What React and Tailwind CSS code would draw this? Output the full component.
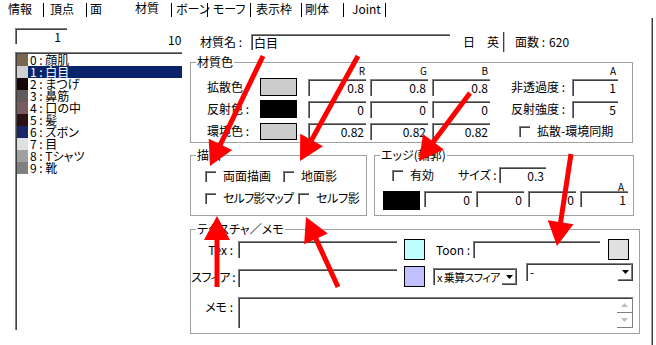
import React from 'react'

const sunken = 'bg-white border-t border-l border-[#808080] shadow-[inset_1px_1px_0_#404040]'

function Field({ className = '', value = '', left = false }) {
  return (
    <div className={`${sunken} flex items-center whitespace-nowrap ${left ? 'pl-[2px]' : 'justify-end pr-[2px]'} ${className}`}>
      {value}
    </div>
  )
}

function Check({ label, className = '', labelClass = '' }) {
  return (
    <div className={`flex items-center whitespace-nowrap ${className}`}>
      <div className="w-[11px] h-[11px] shrink-0 bg-white border-t border-l border-[#808080] shadow-[inset_1px_1px_0_#404040]" />
      <span className={`ml-[7px] ${labelClass}`}>{label}</span>
    </div>
  )
}

function Group({ title, className = '', children }) {
  return (
    <div className={`relative border border-[#a0a0a0] ${className}`}>
      <span className="absolute -top-[7px] left-[5px] bg-white px-[1px] whitespace-nowrap">{title}</span>
      {children}
    </div>
  )
}

function DropSelect({ className = '', value, textClass = '' }) {
  return (
    <div className={`${sunken} flex ${className}`}>
      <span className={`flex-1 pl-[3px] pt-[2px] whitespace-nowrap overflow-hidden ${textClass}`}>{value}</span>
      <div className="w-[15px] shrink-0 flex items-center justify-center border-r border-b border-[#404040] shadow-[inset_-1px_-1px_0_#808080]">
        <svg width="7" height="4" viewBox="0 0 7 4">
          <path d="M0 0h7L3.5 4z" fill="#000" />
        </svg>
      </div>
    </div>
  )
}

function Sep() {
  return <div className="w-[1px] h-[14px] bg-black" />
}

const materials = [
  { label: '0 : 顔肌', color: 'bg-[#7b6450]' },
  { label: '1 : 白目', color: 'bg-[#d0d0d0]', selected: true },
  { label: '2 : まつげ', color: 'bg-[#140606]' },
  { label: '3 : 鼻筋', color: 'bg-[#625a5a]' },
  { label: '4 : 口の中', color: 'bg-[#7a5a60]' },
  { label: '5 : 髪', color: 'bg-[#2a1212]' },
  { label: '6 : ズボン', color: 'bg-[#1a2668]' },
  { label: '7 : 目', color: 'bg-[#e0e0e0]' },
  { label: '8 : Tシャツ', color: 'bg-[#a0a0a0]' },
  { label: '9 : 靴', color: 'bg-[#808080]' },
]

const arrows = [
  [263, 56, 210, 166],
  [358, 56, 300, 161],
  [470, 93, 419, 161],
  [571, 154, 557, 246],
  [217, 287, 217, 216],
  [338, 287, 306, 217],
]

function Arrow({ a }) {
  const [x1, y1, x2, y2] = a
  const dx = x2 - x1
  const dy = y2 - y1
  const len = Math.hypot(dx, dy)
  const ux = dx / len
  const uy = dy / len
  const head = 24
  const half = 13
  const bx = x2 - ux * head
  const by = y2 - uy * head
  const px = -uy * half
  const py = ux * half
  return (
    <g>
      <line x1={x1} y1={y1} x2={bx + ux * 3} y2={by + uy * 3} stroke="#ff0000" strokeWidth="5" />
      <polygon points={`${x2},${y2} ${bx + px},${by + py} ${bx - px},${by - py}`} fill="#ff0000" />
    </g>
  )
}

export default function App() {
  return (
    <div className="relative w-[656px] h-[345px] overflow-hidden bg-white text-black text-[12px] leading-[12px] font-['Noto_Sans_CJK_JP',sans-serif] [font-feature-settings:'palt']">
      {/* Tabs */}
      <div className="flex items-start h-[18px] pt-[3px] whitespace-nowrap">
        <div className="w-[8px]" />
        <span className="w-[35px]">情報</span>
        <Sep />
        <span className="w-[42px] pl-[6px]">頂点</span>
        <Sep />
        <span className="w-[45px] pl-[3px]">面</span>
        <span className="w-[39px] pl-[3px] relative -top-[1px]">材質</span>
        <Sep />
        <span className="w-[35px] pl-[4px]">ボーン</span>
        <Sep />
        <span className="w-[42px] pl-[5px]">モーフ</span>
        <Sep />
        <span className="w-[50px] pl-[5px]">表示枠</span>
        <Sep />
        <span className="w-[41px] pl-[3px]">剛体</span>
        <Sep />
        <span className="w-[41px] pl-[8px]">Joint</span>
        <Sep />
      </div>

      <div className="flex h-[327px]">
        {/* Material list */}
        <div className="w-[190px] pl-[15px]">
          <div className="flex items-start mt-[10px]">
            <Field className="w-[52px] h-[16px] pr-[6px]" value="1" />
            <span className="ml-[101px] mt-[6px]">10</span>
          </div>
          <div className="mt-[6px] w-[167px] h-[278px] border-t border-l border-[#808080] shadow-[inset_1px_1px_0_#404040] pt-[1px] pl-[1px]">
            {materials.map((m) => (
              <div key={m.label} className="flex h-[12px]">
                <div className={`w-[11px] h-[12px] ${m.color}`} />
                <span className={`flex-1 pl-[2px] whitespace-nowrap leading-[12px] ${m.selected ? 'bg-[#0a246a] text-white' : ''}`}>{m.label}</span>
              </div>
            ))}
          </div>
        </div>

        {/* Editor */}
        <div className="w-[461px]">
          <div className="flex items-center h-[16px] mt-[16px] whitespace-nowrap">
            <span className="ml-[10px] w-[51px]">材質名 :</span>
            <Field left className="w-[199px] h-[16px]" value="白目" />
            <span className="ml-[13px]">日</span>
            <span className="ml-[12px]">英</span>
            <div className="ml-[4px] w-[2px] h-[20px] border-l border-[#404040] border-r border-r-[#c0c0c0]" />
            <span className="ml-[10px]">面数 :</span>
            <span className="ml-[4px]">620</span>
          </div>

          {/* 材質色 */}
          <Group title="材質色" className="mt-[12px] w-[443px] h-[81px]">
            <div className="pl-[16px] pt-[1px]">
              <div className="flex items-end h-[14px] pb-[2px] text-[10px] leading-[10px]">
                <div className="w-[101px]" />
                <span className="w-[58px] text-right pr-[1px]">R</span>
                <span className="ml-[4px] w-[58px] text-right pr-[1px]">G</span>
                <span className="ml-[4px] w-[58px] text-right pr-[2px]">B</span>
                <span className="ml-[82px] w-[46px] text-right pr-[2px]">A</span>
              </div>
              <div className="flex items-center h-[18px] whitespace-nowrap">
                <span className="w-[53px]">拡散色</span>
                <div className="w-[37px] h-[18px] border border-black bg-[#cccccc]" />
                <Field className="ml-[11px] w-[58px] h-[17px]" value="0.8" />
                <Field className="ml-[4px] w-[58px] h-[17px]" value="0.8" />
                <Field className="ml-[4px] w-[58px] h-[17px]" value="0.8" />
                <span className="ml-[21px] w-[61px]">非透過度 :</span>
                <Field className="w-[46px] h-[17px]" value="1" />
              </div>
              <div className="flex items-center h-[18px] mt-[4px] whitespace-nowrap">
                <span className="w-[53px]">反射色 :</span>
                <div className="w-[37px] h-[18px] border border-black bg-black" />
                <Field className="ml-[11px] w-[58px] h-[17px]" value="0" />
                <Field className="ml-[4px] w-[58px] h-[17px]" value="0" />
                <Field className="ml-[4px] w-[58px] h-[17px]" value="0" />
                <span className="ml-[21px] w-[61px]">反射強度 :</span>
                <Field className="w-[46px] h-[17px]" value="5" />
              </div>
              <div className="flex items-center h-[18px] mt-[4px] whitespace-nowrap">
                <span className="w-[53px]">環境色 :</span>
                <div className="w-[37px] h-[17px] border border-black bg-[#cccccc]" />
                <Field className="ml-[11px] w-[58px] h-[17px]" value="0.82" />
                <Field className="ml-[4px] w-[58px] h-[17px]" value="0.82" />
                <Field className="ml-[4px] w-[58px] h-[17px]" value="0.82" />
                <Check className="ml-[29px]" label="拡散-環境同期" />
              </div>
            </div>
          </Group>

          {/* 描画 / エッジ */}
          <div className="flex mt-[12px]">
            <Group title="描画" className="w-[177px] h-[61px]">
              <div className="pl-[14px]">
                <div className="flex h-[12px] mt-[14px]">
                  <Check className="w-[78px]" label="両面描画" />
                  <Check label="地面影" />
                </div>
                <div className="flex h-[12px] mt-[10px]">
                  <Check className="w-[93px]" label="セルフ影マップ" labelClass="tracking-[-0.8px]" />
                  <Check label="セルフ影" labelClass="tracking-[-0.3px]" />
                </div>
              </div>
            </Group>
            <Group title="エッジ(輪郭)" className="ml-[7px] w-[260px] h-[61px]">
              <div className="pl-[8px]">
                <div className="flex items-center h-[16px] mt-[11px] pl-[9px] whitespace-nowrap">
                  <Check className="w-[66px]" label="有効" />
                  <span className="w-[41px]">サイズ :</span>
                  <Field className="w-[47px] h-[16px]" value="0.3" />
                </div>
                <div className="flex justify-end h-[8px] pr-[9px] text-[10px] leading-[8px]">A</div>
                <div className="flex items-start">
                  <div className="w-[37px] h-[19px] bg-black" />
                  <Field className="ml-[4px] w-[48px] h-[16px]" value="0" />
                  <Field className="ml-[4px] w-[48px] h-[16px]" value="0" />
                  <Field className="ml-[4px] w-[48px] h-[16px]" value="0" />
                  <Field className="ml-[4px] w-[48px] h-[16px]" value="1" />
                </div>
              </div>
            </Group>
          </div>

          {/* テクスチャ／メモ */}
          <Group title="テクスチャ／メモ" className="mt-[13px] w-[450px] h-[105px]">
            <div className="flex items-center h-[21px] mt-[9px] whitespace-nowrap">
              <span className="w-[42px] text-right">Tex :</span>
              <Field left className="ml-[5px] w-[159px] h-[17px]" />
              <div className="ml-[7px] w-[21px] h-[21px] border border-black bg-[#c0ffff]" />
              <span className="ml-[11px] w-[37px]">Toon :</span>
              <Field left className="w-[127px] h-[17px]" />
              <div className="ml-[8px] w-[21px] h-[21px] border border-black bg-[#e0e0e0]" />
            </div>
            <div className="flex items-end h-[21px] mt-[6px] whitespace-nowrap">
              <span className="w-[42px] text-right self-center tracking-[-0.5px]">スフィア :</span>
              <Field left className="ml-[5px] w-[159px] h-[18px]" />
              <div className="ml-[7px] w-[21px] h-[21px] border border-black bg-[#c0c0ff]" />
              <DropSelect className="ml-[8px] w-[84px] h-[17px] mb-[2px]" textClass="text-[11px] tracking-[-0.6px] pl-[2px]" value="x 乗算スフィア" />
              <DropSelect className="ml-[9px] w-[107px] h-[18px] self-start -mt-[3px]" value="-" />
            </div>
            <div className="flex mt-[10px]">
              <span className="w-[42px] text-right mt-[4px]">メモ :</span>
              <div className={`${sunken} ml-[5px] w-[395px] h-[31px] flex justify-end`}>
                <div className="w-[16px] flex flex-col">
                  <div className="h-[15px] flex items-center justify-center border-r border-b border-[#808080]">
                    <svg width="7" height="4" viewBox="0 0 7 4">
                      <path d="M3.5 0L7 4H0z" fill="#c0c0c0" />
                    </svg>
                  </div>
                  <div className="h-[15px] flex items-center justify-center border-r border-b border-[#808080]">
                    <svg width="7" height="4" viewBox="0 0 7 4">
                      <path d="M0 0h7L3.5 4z" fill="#c0c0c0" />
                    </svg>
                  </div>
                </div>
              </div>
            </div>
          </Group>
        </div>

        <div className="w-[2px] h-full border-l border-[#a0a0a0] border-r border-r-[#404040]" />
      </div>

      {/* Annotation arrows */}
      <svg className="absolute inset-0 pointer-events-none" width="656" height="345">
        {arrows.map((a, i) => (
          <Arrow key={i} a={a} />
        ))}
      </svg>
    </div>
  )
}
